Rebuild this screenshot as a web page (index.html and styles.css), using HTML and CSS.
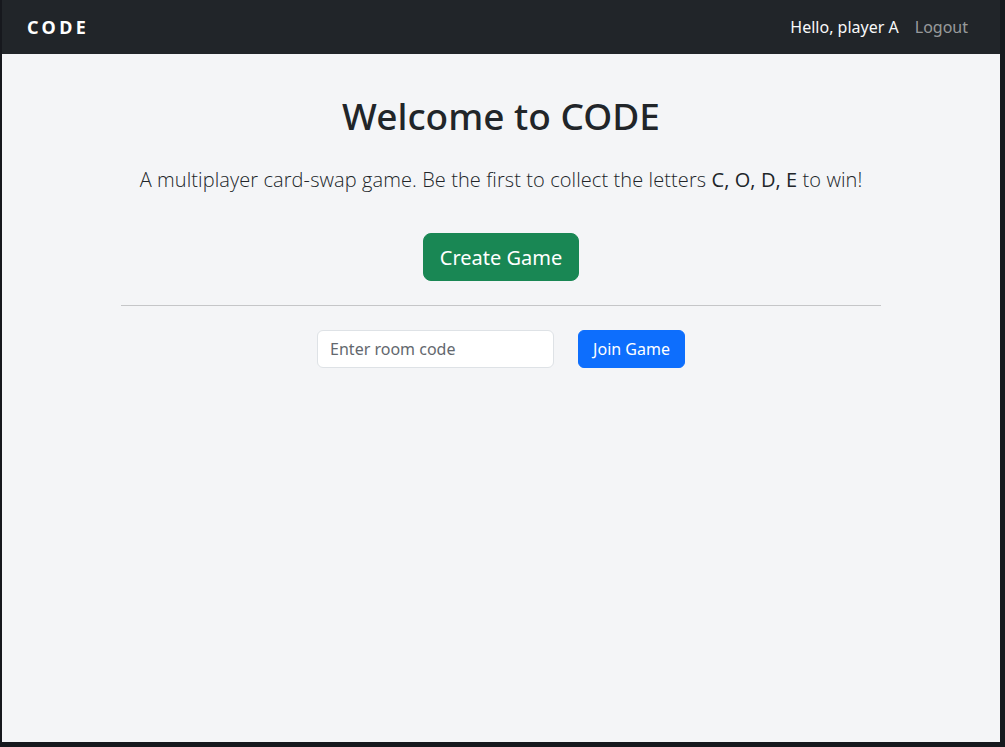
FILE: index.html
```html
<!DOCTYPE html>
<html lang="en">
<head>
<meta charset="utf-8">
<title>CODE</title>
<link rel="stylesheet" href="styles.css">
</head>
<body>
<div class="frame">
  <nav class="navbar">
    <span class="brand">CODE</span>
    <div class="nav-right">
      <span class="hello">Hello, player A</span>
      <a class="logout" href="#">Logout</a>
    </div>
  </nav>
  <main class="main">
    <div class="content">
      <h1 class="title">Welcome to CODE</h1>
      <p class="lead">A multiplayer card-swap game. Be the first to collect the letters <strong>C, O, D, E</strong> to win!</p>
      <button class="btn btn-create">Create Game</button>
      <hr class="divider">
      <form class="join-row">
        <input class="room-input" type="text" placeholder="Enter room code">
        <button class="btn btn-join" type="button">Join Game</button>
      </form>
    </div>
  </main>
</div>
</body>
</html>
```

FILE: styles.css
```css
* { box-sizing: border-box; }
html, body { height: 100%; }
body {
  margin: 0;
  background: #16181d;
  font-family: "Noto Sans", "Open Sans", sans-serif;
  color: #212529;
}
.frame {
  height: 100%;
  padding: 0 5px 5px 2px;
  display: flex;
  flex-direction: column;
}
.navbar {
  height: 54px;
  flex: none;
  background: #212529;
  display: flex;
  align-items: center;
  justify-content: space-between;
  padding: 0 32px 0 25px;
}
.brand {
  color: #fff;
  font-weight: 700;
  font-size: 18px;
  letter-spacing: 3.4px;
}
.nav-right {
  display: flex;
  align-items: center;
  gap: 16px;
  font-size: 16px;
}
.hello { color: #f8f9fa; }
.logout { color: rgba(255,255,255,0.55); text-decoration: none; }
.main {
  flex: 1;
  background: #f4f5f7;
  display: flex;
  justify-content: center;
}
.content {
  width: 760px;
  padding-top: 40px;
  text-align: center;
}
.title {
  margin: 0 0 27px;
  font-size: 37px;
  font-weight: 500;
  line-height: 1.2;
}
.lead {
  margin: 0 0 38px;
  font-family: "Open Sans", "Noto Sans", sans-serif;
  font-size: 20px;
  font-weight: 300;
  letter-spacing: 0.09px;
  line-height: 1.5;
}
.lead strong { font-weight: 500; }
.btn {
  font-family: inherit;
  border: 1px solid transparent;
  color: #fff;
  cursor: pointer;
}
.btn-create {
  background: #198754;
  border-color: #198754;
  font-size: 20px;
  padding: 0 16px;
  height: 48px;
  border-radius: 8px;
}
.divider {
  margin: 24px 0;
  border: 0;
  border-top: 1px solid #c5c6c8;
}
.join-row {
  display: flex;
  justify-content: center;
  gap: 24px;
}
.room-input {
  width: 237px;
  height: 38px;
  border: 1px solid #dee2e6;
  border-radius: 6px;
  background: #fff;
  padding: 0 12px;
  font-family: inherit;
  font-size: 16px;
  color: #212529;
}
.room-input::placeholder { color: #63686e; }
.btn-join {
  background: #0d6efd;
  border-color: #0d6efd;
  font-size: 16px;
  height: 38px;
  padding: 0 14px;
  border-radius: 6px;
}
```
